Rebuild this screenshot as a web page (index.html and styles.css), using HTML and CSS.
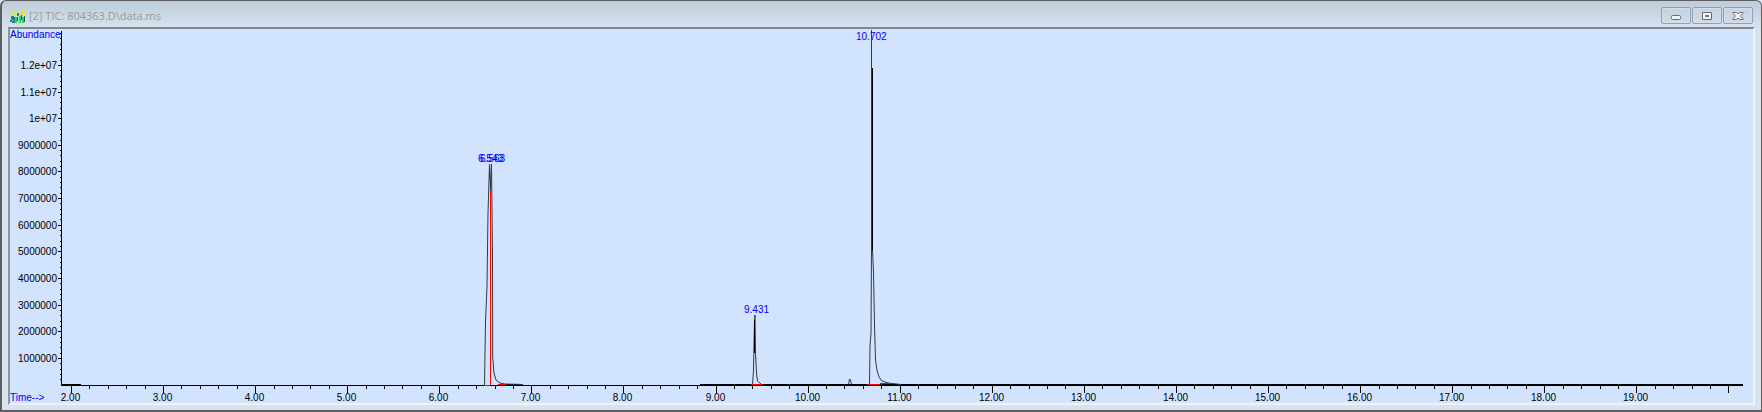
FILE: index.html
```
<!DOCTYPE html>
<html lang="en">
<head>
<meta charset="utf-8">
<title>[2] TIC: 804363.D\data.ms</title>
<link rel="stylesheet" href="styles.css">
</head>
<body>
<main class="window">
  <header class="titlebar">
    <svg class="app-icon" viewBox="0 0 16 14" aria-hidden="true">
      <path fill="#e6e629" d="M3 1h2v3h2v2H5V5H2v1H0V4h3zM11 0h2v3h2v2h1v1h-3V5h-2v1H8V4h3z"/>
      <path fill="#128f86" d="M1 7h3v2h1v3H3v-1H1zM0 11h2v2H0zM2 12h4v2H2zM7 4h2v3H7z"/>
      <path fill="#22d860" d="M5 11V8h2v6H5zM9 7h2v7H9zM12 8h2v6h-2z"/>
      <path fill="#15654d" d="M7 8h1v4H7zM11 6h1v5h-1zM14 7h1v6h-1zM3 8h2v1H3z"/>
    </svg>
    <h1 class="title">[2] TIC: 804363.D\data.ms</h1>
    <div class="controls">
      <button class="control" type="button" aria-label="Minimize">
        <svg class="glyph" viewBox="0 0 12 10"><rect x="1.5" y="4.5" width="9" height="4" rx="1"/></svg>
      </button>
      <button class="control" type="button" aria-label="Maximize">
        <svg class="glyph" viewBox="0 0 12 10"><path fill-rule="evenodd" d="M1.5 1.500h9v7h-9zM4.500 4.500v1h3v-1z"/></svg>
      </button>
      <button class="control" type="button" aria-label="Close">
        <svg class="glyph" viewBox="0 0 12 10"><path d="M1 1.500h3.500L6 3l1.500-1.500H11v1L8.500 5 11 7.500v1H7.500L6 7 4.500 8.500H1v-1L3.500 5 1 2.500z"/></svg>
      </button>
    </div>
  </header>
  <section class="panel">
    <svg class="chart" viewBox="10 29 1743 374" role="img" aria-label="Total ion chromatogram">
      <g class="axes">
        <path id="ticks" class="line"/>
        <path class="line" d="M61.500 31V385.500H1743"/>
        <path class="line" d="M61 384.500H81M505 384.500H523M700 384.500H1743"/>
      </g>
      <g id="labels"></g>
      <g class="peaks">
        <path class="trace" d="M484.500 385L485.500 322 487 286 488 213 489.500 164 490.500 188 491.500 164 492.500 254 492.700 357 494 373 496 380 500 383 505 384 523 384.500"/>
        <path class="trace" d="M489.500 166V178M490.500 178V191"/>
        <path class="trace" d="M752.500 384.500L753.500 370 754.500 320 755 315 755.500 353 756.500 373 757.500 381 761 384"/>
        <path class="line" d="M754.500 320V353"/>
        <path class="trace" d="M848.500 384.500L849.500 379 850.500 380 851.500 384.500"/>
        <path class="trace" d="M869.500 384.500L870 346 871 333 871.500 250V30M872.500 68V250L873.500 272 874.500 325 875.500 360 877 370 879 377 882 381 888 383 901 384.500"/>
        <path class="line" d="M872.500 68V250"/>
        <path class="baseline" d="M490.500 191V385.500M484 385.500H490M498 384.500H506M751 384.500H763M867 384.500H880M880 383.500H892"/>
      </g>
      <g class="note">
        <text x="10" y="38">Abundance</text>
        <text x="10" y="401">Time--&gt;</text>
        <text x="478" y="162">6.543</text>
        <text x="480" y="162">6.563</text>
        <text x="744" y="313">9.431</text>
        <text x="856" y="40">10.702</text>
      </g>
    </svg>
  </section>
</main>
<script src="chart.js"></script>
</body>
</html>
```
FILE: chart.js
```
const timeToX = t => 71.5 + (t - 2) * 92.08;
const abundanceToY = a => 385 - a * 26.63;
const labels = document.getElementById('labels');

function addLabel(text, x, y, anchor) {
  const node = document.createElementNS('http://www.w3.org/2000/svg', 'text');
  node.setAttribute('x', x);
  node.setAttribute('y', y);
  node.setAttribute('class', 'scale ' + anchor);
  node.textContent = text;
  labels.appendChild(node);
}

let d = '';
for (let i = 0; i <= 90; i++) {
  const x = Math.floor(timeToX(2 + i / 5)) + 0.5;
  d += `M${x} 385v${i % 5 ? 4 : 8}`;
  if (i % 5 === 0 && i < 90) addLabel((2 + i / 5).toFixed(2), x - 1, 401, 'middle');
}
for (let i = 1; i <= 66; i++) {
  const y = Math.floor(abundanceToY(i / 5)) + 0.5;
  const major = i % 5 === 0 && i <= 60;
  d += `M${major ? 58 : 60} ${y}H61`;
  if (major) {
    const a = i / 5;
    const text = a < 10 ? String(a * 1000000) : `${a / 10}e+07`;
    addLabel(text, 57, y + 3.5, 'end');
  }
}
document.getElementById('ticks').setAttribute('d', d);
```
FILE: styles.css
```
* { box-sizing: border-box; }

body {
  margin: 0;
  background: #d7e4f0;
  font-family: "Liberation Sans", Arial, sans-serif;
}

.window {
  display: flex;
  flex-direction: column;
  min-height: 100vh;
  padding: 0 6px 5px 6px;
  border: solid #5d5d62;
  border-width: 1px 1px 2px 2px;
  border-radius: 6px 6px 0 0;
  background: linear-gradient(#becbd8, #d7e4f0 28px);
}

.titlebar {
  display: flex;
  align-items: center;
  gap: 3px;
  height: 26px;
  padding: 3px 2px 0 2px;
}

.app-icon {
  width: 16px;
  height: 14px;
}

.title {
  flex: 1;
  margin: 0;
  color: #99999b;
  font: 400 11px/16px "Open Sans", sans-serif;
}

.controls {
  display: flex;
  gap: 1px;
}

.control {
  display: grid;
  place-items: center;
  width: 30px;
  height: 17px;
  padding: 0;
  border: 1px solid #8f9fb8;
  border-radius: 2px;
  background: linear-gradient(#c7d3e0, #cfdbe8);
  box-shadow: inset 0 0 0 1px #d2deea;
}

.glyph {
  width: 12px;
  height: 10px;
  fill: #f2f2f2;
  stroke: #686b76;
}

.panel {
  border: 2px solid #f2f2f2;
  border-top-color: #848688;
  border-left-color: #929395;
  background: #d2e3fe;
}

.chart {
  display: block;
  width: 100%;
  height: auto;
  font-size: 10px;
}

.line,
.trace,
.baseline {
  fill: none;
  stroke: #000;
}

.trace { stroke: #303942; }
.baseline { stroke: #f00; }
.scale { fill: #000; }
.middle { text-anchor: middle; }
.end { text-anchor: end; }
.note { fill: #00f; }
```
